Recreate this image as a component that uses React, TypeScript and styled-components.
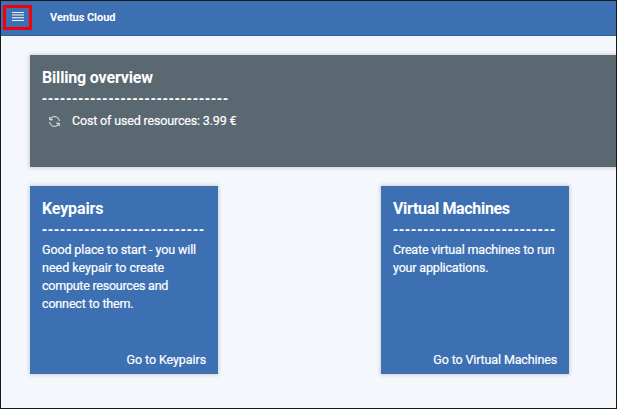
import React from 'react';
import styled, { createGlobalStyle } from 'styled-components';

const GlobalStyle = createGlobalStyle`
  * { box-sizing: border-box; }
  html, body { margin: 0; padding: 0; overflow: hidden; }
  body { font-family: Roboto, "Liberation Sans", sans-serif; color: #fff; }
`;

const Frame = styled.div`
  width: 617px;
  height: 409px;
  border: 1px solid #17181c;
  background: #f4f7fc;
  overflow: hidden;
`;

const TopBar = styled.header`
  display: flex;
  align-items: flex-start;
  height: 35px;
  padding: 4px 0 0 2px;
  background: #3d70b2;
  border-bottom: 1px solid #30609f;
`;

const MenuButton = styled.button`
  display: flex;
  justify-content: center;
  width: 29px;
  height: 25px;
  padding: 4px 0 0;
  border: 3px solid #f50008;
  border-radius: 1px;
  background: transparent;
`;

const Brand = styled.span`
  margin: 5px 0 0 18px;
  font-size: 11px;
  line-height: 16px;
  font-weight: 700;
  letter-spacing: -0.05px;
`;

const Content = styled.main`
  display: flex;
  flex-direction: column;
  gap: 19px;
  padding: 19px 0 0 29px;
`;

const Card = styled.section<{ $tone: 'slate' | 'blue' }>`
  display: flex;
  flex-direction: column;
  flex: none;
  width: ${p => (p.$tone === 'slate' ? '600px' : '188px')};
  height: ${p => (p.$tone === 'slate' ? '112px' : '188px')};
  padding: 11px 12px 5px;
  background: ${p => (p.$tone === 'slate' ? '#5a6872' : '#3d70b2')};
  box-shadow: 0 0 4px 1px rgba(0, 0, 0, 0.16);
`;

const CardRow = styled.div`
  display: flex;
  gap: 163px;
`;

const Title = styled.h2<{ $track: number }>`
  margin: 0;
  font-size: 16px;
  line-height: 23px;
  font-weight: 700;
  white-space: nowrap;
  letter-spacing: ${p => p.$track}px;
`;

const Dashes = styled.div`
  height: 18px;
  font: 700 15px/18px "Liberation Sans", sans-serif;
  letter-spacing: 1.04px;
  white-space: nowrap;
`;

const Line = styled.span<{ $track: number }>`
  display: block;
  font-size: 12.5px;
  line-height: 18px;
  font-weight: 400;
  white-space: nowrap;
  letter-spacing: ${p => p.$track}px;
  -webkit-text-stroke: 0.2px #fff;
`;

const CostRow = styled.div`
  display: flex;
  align-items: center;
  gap: 12px;
  margin-top: 5px;
  padding-left: 7px;
`;

const Copy = styled.div`
  margin-top: 3px;
`;

const CardLink = styled.a`
  align-self: flex-end;
  margin-top: auto;
`;

const MenuIcon = () => (
  <svg width="12" height="10" viewBox="0 0 12 10" fill="#fff">
    <rect width="12" height="1" opacity=".9" />
    <rect y="2" width="12" height="1" opacity=".55" />
    <rect y="3" width="12" height="1" opacity=".45" />
    <rect y="5" width="12" height="1" opacity=".75" />
    <rect y="6" width="12" height="1" opacity=".3" />
    <rect y="8" width="12" height="1" opacity=".9" />
  </svg>
);

const RefreshIcon = () => (
  <svg width="11" height="11" viewBox="0 0 11 11" fill="none" stroke="#f2f4f5" strokeWidth="1">
    <path d="M.8.8v3h3M1.200 3.500C2 1.500 3.700.6 5.500.6c2.600 0 4.600 1.900 4.800 4.400" />
    <path d="M10.200 10.200v-3h-3M9.800 7.500c-.8 2-2.500 2.900-4.300 2.900C2.900 10.400.9 8.500.7 6" />
  </svg>
);

type Row = { text: string; track: number };
const cards: { title: Row; lines: Row[]; link: Row }[] = [
  {
    title: { text: 'Keypairs', track: -0.15 },
    lines: [
      { text: 'Good place to start - you will', track: -0.11 },
      { text: 'need keypair to create', track: 0 },
      { text: 'compute resources and', track: -0.24 },
      { text: 'connect to them.', track: -0.15 },
    ],
    link: { text: 'Go to Keypairs', track: -0.08 },
  },
  {
    title: { text: 'Virtual Machines', track: -0.33 },
    lines: [
      { text: 'Create virtual machines to run', track: -0.17 },
      { text: 'your applications.', track: -0.17 },
    ],
    link: { text: 'Go to Virtual Machines', track: -0.13 },
  },
];

export default function App() {
  return (
    <>
      <GlobalStyle />
      <Frame>
        <TopBar>
          <MenuButton aria-label="Menu"><MenuIcon /></MenuButton>
          <Brand>Ventus Cloud</Brand>
        </TopBar>
        <Content>
          <Card $tone="slate">
            <Title $track={-0.17}>Billing overview</Title>
            <Dashes>{'-'.repeat(31)}</Dashes>
            <CostRow>
              <RefreshIcon />
              <Line $track={-0.16}>Cost of used resources: 3.99 €</Line>
            </CostRow>
          </Card>
          <CardRow>
            {cards.map(card => (
              <Card $tone="blue" key={card.title.text}>
                <Title $track={card.title.track}>{card.title.text}</Title>
                <Dashes>{'-'.repeat(27)}</Dashes>
                <Copy>
                  {card.lines.map(l => <Line $track={l.track} key={l.text}>{l.text}</Line>)}
                </Copy>
                <CardLink><Line $track={card.link.track}>{card.link.text}</Line></CardLink>
              </Card>
            ))}
          </CardRow>
        </Content>
      </Frame>
    </>
  );
}
